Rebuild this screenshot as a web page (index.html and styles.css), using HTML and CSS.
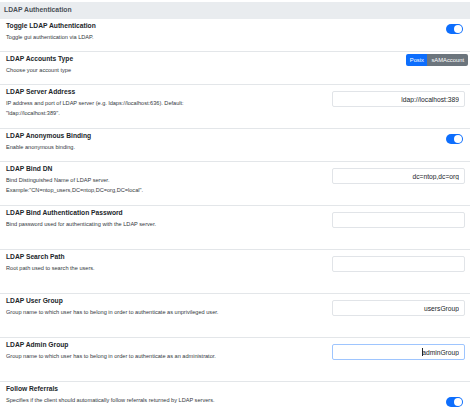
FILE: index.html
```html
<!DOCTYPE html>
<html lang="en">
<head>
    <meta charset="UTF-8">
    <meta name="viewport" content="width=device-width, initial-scale=1.0">
    <title>LDAP Authentication</title>
    <link rel="stylesheet" href="styles.css">
</head>
<body>

    <div class="panel">
        <div class="panel-head">LDAP Authentication</div>

        <div class="setting">
            <div class="info">
                <h4>Toggle LDAP Authentication</h4>
                <p>Toggle gui authentication via LDAP.</p>
            </div>
            <div class="switch"></div>
        </div>

        <div class="setting">
            <div class="info">
                <h4>LDAP Accounts Type</h4>
                <p>Choose your account type</p>
            </div>
            <div class="btn-group">
                <span class="btn active">Posix</span>
                <span class="btn">sAMAccount</span>
            </div>
        </div>

        <div class="setting tall">
            <div class="info">
                <h4>LDAP Server Address</h4>
                <p>IP address and port of LDAP server (e.g. ldaps://localhost:636). Default: "ldap://localhost:389".</p>
            </div>
            <input class="field" type="text" value="ldap://localhost:389">
        </div>

        <div class="setting">
            <div class="info">
                <h4>LDAP Anonymous Binding</h4>
                <p>Enable anonymous binding.</p>
            </div>
            <div class="switch"></div>
        </div>

        <div class="setting tall">
            <div class="info">
                <h4>LDAP Bind DN</h4>
                <p>Bind Distinguished Name of LDAP server. Example:"CN=ntop_users,DC=ntop,DC=org,DC=local".</p>
            </div>
            <input class="field" type="text" value="dc=ntop,dc=org">
        </div>

        <div class="setting tall">
            <div class="info">
                <h4>LDAP Bind Authentication Password</h4>
                <p>Bind password used for authenticating with the LDAP server.</p>
            </div>
            <input class="field" type="password" value="">
        </div>

        <div class="setting tall">
            <div class="info">
                <h4>LDAP Search Path</h4>
                <p>Root path used to search the users.</p>
            </div>
            <input class="field" type="text" value="">
        </div>

        <div class="setting tall">
            <div class="info">
                <h4>LDAP User Group</h4>
                <p>Group name to which user has to belong in order to authenticate as unprivileged user.</p>
            </div>
            <input class="field" type="text" value="usersGroup">
        </div>

        <div class="setting tall">
            <div class="info">
                <h4>LDAP Admin Group</h4>
                <p>Group name to which user has to belong in order to authenticate as an administrator.</p>
            </div>
            <div class="field-wrap">
                <input class="field focused" type="text" value="adminGroup">
                <span class="caret"></span>
            </div>
        </div>

        <div class="setting">
            <div class="info">
                <h4>Follow Referrals</h4>
                <p>Specifies if the client should automatically follow referrals returned by LDAP servers.</p>
            </div>
            <div class="switch low"></div>
        </div>
    </div>

</body>
</html>
```

FILE: styles.css
```css
/* Reset default styles */
* {
    margin: 0;
    padding: 0;
    box-sizing: border-box;
}

body {
    font-family: "Liberation Sans", Arial, sans-serif;
    font-size: 6.7px;
    color: #212529;
    background-color: #fff;
}

.panel {
    width: 470px;
    margin-top: 2px;
}

.panel-head {
    height: 17px;
    line-height: 16px;
    padding-left: 4px;
    background-color: #e9ecef;
    font-size: 6.8px;
    font-weight: bold;
    color: #495057;
}

.setting {
    display: flex;
    justify-content: space-between;
    align-items: flex-start;
    height: 33px;
    padding: 2px 5px 0 6px;
    border-bottom: 1px solid #e3e6e9;
}

.setting.tall {
    height: 44px;
}

.info {
    width: 226px;
}

.info h4 {
    font-size: 6.7px;
    line-height: 10px;
    font-weight: bold;
    color: #212529;
}

.info p {
    font-size: 5.6px;
    line-height: 10px;
    margin-top: 1px;
    color: #33383d;
}

/* toggle switch */
.switch {
    position: relative;
    width: 17px;
    height: 10px;
    margin-top: 3px;
    margin-right: 2px;
    border-radius: 5px;
    background-color: #0d6efd;
}

.switch::after {
    content: "";
    position: absolute;
    top: 1px;
    right: 1px;
    width: 8px;
    height: 8px;
    border-radius: 50%;
    background-color: #fff;
}

.switch.low {
    margin-top: 13px;
}

/* account type buttons */
.btn-group {
    display: flex;
    height: 12px;
    margin-right: -3px;
    border-radius: 2px;
    overflow: hidden;
}

.btn {
    padding: 0 4px;
    line-height: 12px;
    font-size: 5.8px;
    color: #fff;
    background-color: #6c757d;
}

.btn.active {
    padding: 0 3.5px;
    background-color: #0d6efd;
}

/* text inputs */
.field {
    width: 133px;
    height: 16px;
    margin-top: 4px;
    padding: 0 5px;
    border: 1px solid #e1e4e8;
    border-radius: 2px;
    font-family: "Liberation Sans", Arial, sans-serif;
    font-size: 6.7px;
    text-align: right;
    color: #212529;
    background-color: #fff;
    outline: none;
}

.field.focused {
    border-color: #9ec5fe;
}

.field-wrap {
    position: relative;
}

.caret {
    position: absolute;
    top: 8px;
    left: 90px;
    width: 1px;
    height: 8px;
    background-color: #212529;
}
```
